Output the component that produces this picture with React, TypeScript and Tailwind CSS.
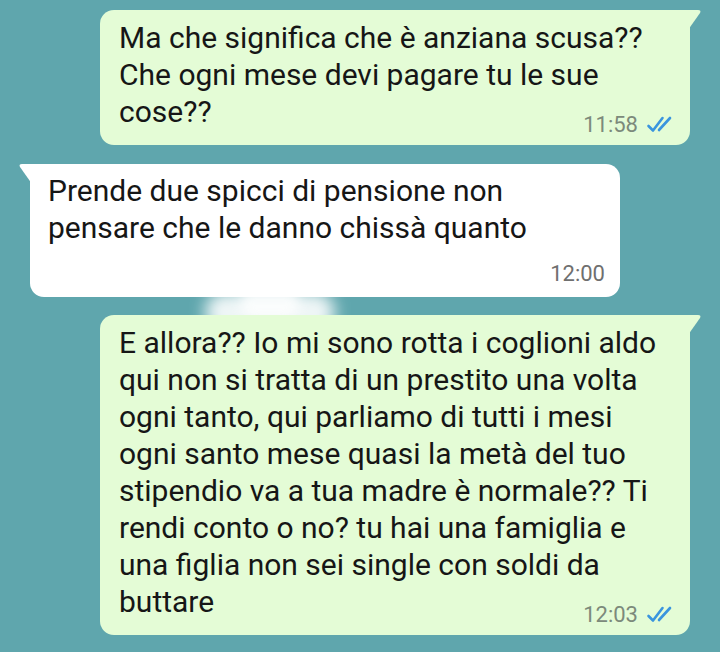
import React from "react";

const font = { fontFamily: "Roboto, 'Noto Sans', sans-serif" };

function Checks() {
  return (
    <svg width="29" height="17" viewBox="0 0 29 17" className="ml-[8px] mb-[3px]">
      <path d="M2.5 10 L7 14.5 L16.5 2" fill="none" stroke="#3a95de" strokeWidth="2.6" strokeLinecap="round" strokeLinejoin="round" />
      <path d="M13 14 L24 2" fill="none" stroke="#3a95de" strokeWidth="2.6" strokeLinecap="round" />
    </svg>
  );
}

function OutTail() {
  return (
    <svg width="14" height="22" viewBox="0 0 14 22" className="absolute right-[-12px] top-0">
      <path d="M0 0 L10 0 Q13.5 0 12 3 L0 20 Z" fill="#e4fcd6" />
    </svg>
  );
}

function InTail() {
  return (
    <svg width="14" height="22" viewBox="0 0 14 22" className="absolute left-[-12px] top-0">
      <path d="M14 0 L4 0 Q0.5 0 2 3 L14 20 Z" fill="#ffffff" />
    </svg>
  );
}

function Out({ lines, time }: { lines: string[]; time: string }) {
  const last = lines[lines.length - 1];
  return (
    <div className="relative ml-[100px] w-[590px] rounded-[14px] rounded-tr-none bg-[#e4fcd6] pl-[19px] pr-[15px] pt-[9px] pb-[9px] text-[30px] leading-[37px] text-[#161616]">
      <OutTail />
      {lines.slice(0, -1).map((l, i) => (
        <div key={i} className="whitespace-nowrap">{l}</div>
      ))}
      <div className="flex items-end justify-between">
        <span className="mb-[6px] whitespace-nowrap">{last}</span>
        <span className="flex items-end">
          <span className="text-[22px] leading-[22px] text-[#7c8a7b]">{time}</span>
          <Checks />
        </span>
      </div>
    </div>
  );
}

export default function App() {
  return (
    <div className="relative w-[720px] h-[652px] overflow-hidden bg-[#5fa6ad]" style={font}>
      <div className="absolute left-[205px] top-[292px] w-[130px] h-[40px] rounded-full bg-white opacity-90 blur-[8px]" />
      <div className="absolute left-[240px] top-[288px] w-[60px] h-[30px] rounded-full bg-white opacity-80 blur-[6px]" />
      <div className="relative flex flex-col pt-[10px]">
        <Out
          lines={["Ma che significa che è anziana scusa??", "Che ogni mese devi pagare tu le sue", "cose??"]}
          time="11:58"
        />
        <div className="relative mt-[19px] ml-[30px] w-[590px] rounded-[14px] rounded-tl-none bg-white pl-[18px] pr-[15px] pt-[8px] pb-[12px] text-[30px] leading-[37px] text-[#161616]">
          <InTail />
          <div className="whitespace-nowrap">Prende due spicci di pensione non</div>
          <div className="whitespace-nowrap">pensare che le danno chissà quanto</div>
          <div className="mt-[17px] flex justify-end">
            <span className="text-[22px] leading-[22px] text-[#6f6f6f]">12:00</span>
          </div>
        </div>
        <div className="mt-[18px]">
          <Out
            lines={[
              "E allora?? Io mi sono rotta i coglioni aldo",
              "qui non si tratta di un prestito una volta",
              "ogni tanto, qui parliamo di tutti i mesi",
              "ogni santo mese quasi la metà del tuo",
              "stipendio va a tua madre è normale?? Ti",
              "rendi conto o no? tu hai una famiglia e",
              "una figlia non sei single con soldi da",
              "buttare",
            ]}
            time="12:03"
          />
        </div>
      </div>
    </div>
  );
}
